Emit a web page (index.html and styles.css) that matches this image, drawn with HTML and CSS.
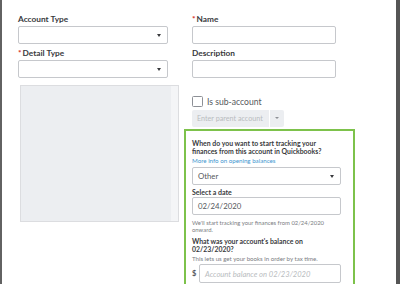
FILE: index.html
```html
<!DOCTYPE html>
<html>
<head>
<meta charset="utf-8">
<link rel="stylesheet" href="styles.css">
</head>
<body>
<div class="frame">
  <div class="content">
    <div class="col-left">
      <div class="label">Account Type</div>
      <div class="select"><span class="caret"></span></div>
      <div class="label label-2"><span class="req">*</span>Detail Type</div>
      <div class="select"><span class="caret"></span></div>
      <div class="graybox"><div class="scroll"></div></div>
    </div>
    <div class="col-right">
      <div class="inner">
        <div class="label"><span class="req">*</span>Name</div>
        <div class="input wide"></div>
        <div class="label label-2">Description</div>
        <div class="input wide"></div>
        <div class="check-row"><span class="checkbox"></span><span class="check-text">Is sub-account</span></div>
        <div class="parent">
          <span class="parent-text">Enter parent account</span>
          <span class="parent-btn"><span class="caret small"></span></span>
        </div>
      </div>
      <div class="green">
        <div class="q">When do you want to start tracking your finances from this account in Quickbooks?</div>
        <div class="link">More info on opening balances</div>
        <div class="field sel"><span class="val">Other</span><span class="caret"></span></div>
        <div class="sub-label">Select a date</div>
        <div class="field"><span class="val">02/24/2020</span></div>
        <div class="note">We'll start tracking your finances from 02/24/2020 onward.</div>
        <div class="q q2">What was your account's balance on 02/23/2020?</div>
        <div class="note note2">This lets us get your books in order by tax time.</div>
        <div class="money"><span class="dollar">$</span><div class="field amt"><span class="ph">Account balance on 02/23/2020</span></div></div>
      </div>
    </div>
  </div>
</div>
</body>
</html>
```
FILE: styles.css
```css
* { box-sizing: border-box; }
html, body { margin: 0; padding: 0; }
body {
  width: 400px;
  height: 284px;
  overflow: hidden;
  background: #fff;
  font-family: Lato, "Open Sans", sans-serif;
  color: #393a3d;
}
.frame {
  width: 400px;
  height: 284px;
  border-left: 2px solid #626262;
  border-right: 4px solid #555;
  background: #fff;
  overflow: hidden;
}
.content {
  display: grid;
  grid-template-columns: 162px 171px;
  column-gap: 4px;
  padding-left: 16px;
  padding-top: 14px;
}
.label {
  font-size: 8.3px;
  font-weight: 700;
  line-height: 10px;
  height: 10px;
  margin-bottom: 2px;
  color: #393a3d;
  white-space: nowrap;
}
.label-2 { margin-top: 4px; }
.req { color: #d52b1e; margin-right: 1px; }
.select, .input {
  position: relative;
  height: 18px;
  border: 1px solid #c6c8cc;
  border-radius: 2px;
  background: #fff;
  width: 150px;
}
.caret {
  position: absolute;
  right: 6px;
  top: 7px;
  width: 0; height: 0;
  border-left: 2.5px solid transparent;
  border-right: 2.5px solid transparent;
  border-top: 3px solid #393a3d;
}
.graybox {
  position: relative;
  margin-top: 7px;
  margin-left: 2px;
  width: 159px;
  height: 137px;
  background: #eceef1;
  border: 1px solid #dcdde0;
}
.scroll {
  position: absolute;
  right: 0; top: 0; bottom: 0;
  width: 7px;
  background: #f4f5f7;
}
.inner { padding-left: 8px; }
.input.wide { width: 144px; }
.check-row {
  display: flex;
  align-items: center;
  margin-top: 18px;
  height: 11px;
}
.checkbox {
  width: 11px; height: 11px;
  border: 1px solid #8d9096;
  border-radius: 1.5px;
  background: #fff;
}
.check-text {
  margin-left: 4px;
  font-size: 8.6px;
  color: #55585d;
}
.parent {
  display: flex;
  margin-top: 3px;
  width: 92px;
  height: 17px;
  background: #eceef1;
  border-radius: 2px;
}
.parent-text {
  flex: 1;
  font-size: 7.2px;
  color: #b9bcc0;
  line-height: 17px;
  padding-left: 5px;
  white-space: nowrap;
  overflow: hidden;
}
.parent-btn {
  position: relative;
  width: 15px;
  flex: none;
  border-left: 1px solid #fff;
}
.caret.small {
  right: 5px;
  top: 7px;
  border-top-color: #8d9096;
  border-left-width: 2px;
  border-right-width: 2px;
  border-top-width: 2.5px;
}
.green {
  margin-top: 2px;
  border: 2px solid #7dc24b;
  border-bottom: none;
  padding: 8px 12px 0 6px;
  height: 160px;
}
.q {
  font-size: 6.9px;
  font-weight: 700;
  line-height: 8px;
  color: #393a3d;
  width: 148px;
}
.link {
  font-size: 6.2px;
  color: #3d95cf;
  line-height: 7px;
  margin-top: 2px;
}
.field {
  position: relative;
  height: 18px;
  border: 1px solid #c6c8cc;
  border-radius: 2px;
  background: #fff;
  width: 149px;
  display: flex;
  align-items: center;
}
.field.sel { margin-top: 3px; }
.field .caret { top: 7px; right: 6px; }
.val {
  font-size: 7.8px;
  color: #55585d;
  padding-left: 5px;
}
.sub-label {
  font-size: 7px;
  font-weight: 700;
  line-height: 8px;
  margin-top: 3px;
  margin-bottom: 1px;
}
.note {
  font-size: 5.9px;
  color: #7a7d82;
  line-height: 7px;
  margin-top: 4px;
  width: 140px;
}
.q2 { margin-top: 4px; width: 125px; }
.note2 { margin-top: 2px; width: 150px; white-space: nowrap; font-size: 6.1px; }
.money {
  display: flex;
  align-items: center;
  margin-top: 2px;
}
.dollar {
  font-size: 7.5px;
  font-weight: 700;
  color: #55585d;
  width: 7px;
}
.field.amt { width: 143px; height: 19px; }
.ph {
  font-size: 7.6px;
  font-style: italic;
  color: #b9bcc0;
  padding-left: 5px;
  white-space: nowrap;
}
```
